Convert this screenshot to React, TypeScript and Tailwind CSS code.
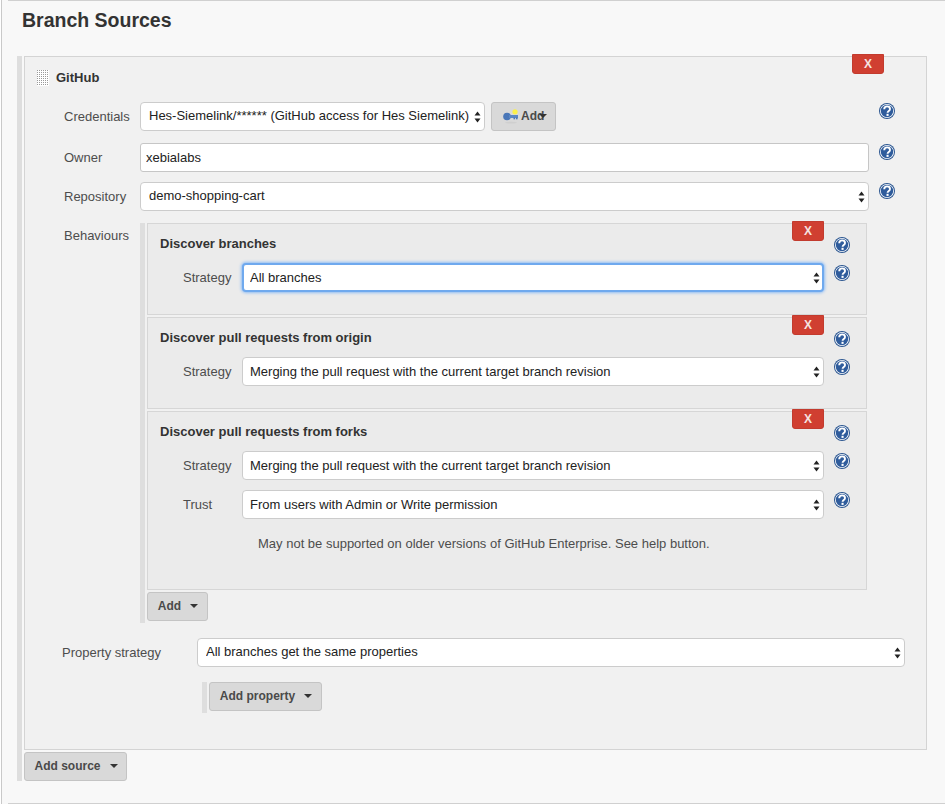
function HelpIcon({ className = "" }: { className?: string }) {
  return (
    <svg className={`shrink-0 ${className}`} width="16" height="16" viewBox="0 0 16 16">
      <circle cx="8" cy="8" r="8" fill="#2b5690" />
      <circle cx="8" cy="8" r="7" fill="#fff" />
      <circle cx="8" cy="8" r="6.2" fill="#2f5c9c" />
      <path d="M5.2 6.2C5.3 4.3 6.5 3.4 8.1 3.4c1.7 0 2.9 1 2.9 2.5 0 2.2-2.4 2-2.4 3.9" fill="none" stroke="#fff" strokeWidth="1.9" />
      <rect x="7.5" y="10.8" width="2.1" height="2.1" fill="#fff" />
    </svg>
  );
}

function Caret() {
  return <span className="ml-[9px] inline-block h-0 w-0 border-x-[4px] border-t-[4px] border-x-transparent border-t-[#333]" />;
}

function DropButton({ label, className = "" }: { label: string; className?: string }) {
  return (
    <button className={`flex h-[29px] items-center justify-center rounded-[3px] border border-[#c4c4c4] bg-[#d9d9d9] pb-[2px] pl-[1px] text-[12px] font-bold text-[#4a4a4a] ${className}`}>
      {label}
      <Caret />
    </button>
  );
}

function DeleteButton({ className = "" }: { className?: string }) {
  return (
    <button className={`absolute flex h-[20px] w-[32px] items-center justify-center rounded-b-[3px] border border-[#c23b2e] bg-[#d03f31] text-[12px] font-bold text-[#f6e3e0] ${className}`}>
      X
    </button>
  );
}

function Select({ value, className = "", selectClass = "pl-2 pb-[2px]", focused = false }: { value: string; className?: string; selectClass?: string; focused?: boolean }) {
  return (
    <div className={`relative h-[29px] ${className}`}>
      <select
        defaultValue={value}
        className={`h-full w-full appearance-none rounded-[4px] bg-white pr-3 text-[13px] text-[#222] outline-none ${selectClass} ${
          focused ? "border-2 border-[#6fa9ee] shadow-[0_0_3px_1px_#8fbdf5]" : "border border-[#cccccc]"
        }`}
      >
        <option>{value}</option>
      </select>
      <svg className="pointer-events-none absolute right-[4px] top-[9px]" width="7" height="12" viewBox="0 0 7 12">
        <path d="M3.5 0.5 6.5 4.5H.5ZM3.5 11.5 .5 7.5H6.5Z" fill="#222" />
      </svg>
    </div>
  );
}

function DragHandle() {
  return (
    <svg width="12" height="16" viewBox="0 0 12 16" className="bg-white">
      <defs>
        <pattern id="dots" width="2" height="2" patternUnits="userSpaceOnUse">
          <rect width="1" height="1" fill="#9a9a9a" />
        </pattern>
      </defs>
      <rect width="12" height="16" fill="url(#dots)" />
    </svg>
  );
}

function KeyIcon() {
  return (
    <svg width="16" height="16" viewBox="0 0 16 16" className="shrink-0">
      <ellipse cx="8" cy="14.6" rx="6" ry="0.9" fill="#cfcfcf" />
      <circle cx="4" cy="8.5" r="3.8" fill="#4a77b8" />
      <rect x="6" y="7" width="9" height="3" fill="#5b87c4" />
      <rect x="10.5" y="9.5" width="1.6" height="1.8" fill="#4a77b8" />
      <rect x="13" y="9.5" width="1.6" height="1.8" fill="#4a77b8" />
      <circle cx="12" cy="3.8" r="2.6" fill="#fbf04a" />
    </svg>
  );
}

function FieldRow({ label, children }: { label: string; children: React.ReactNode }) {
  return (
    <div className="ml-[39px] flex h-[29px] w-[831px] items-start">
      <div className="w-[76px] shrink-0 pt-[7px] text-[13px] leading-[15px] text-[#4d4d4d]">{label}</div>
      <div className="w-[729px] shrink-0">{children}</div>
      <HelpIcon className="ml-[10px] mt-px" />
    </div>
  );
}

function StrategyRow({ label, value, focused }: { label: string; value: string; focused?: boolean }) {
  return (
    <div className="flex h-[29px] items-start">
      <div className="ml-[35px] w-[59px] shrink-0 pt-[7px] text-[13px] leading-[15px] text-[#4d4d4d]">{label}</div>
      <Select value={value} focused={focused} selectClass={focused ? "pl-[6px]" : "pl-[7px]"} className="w-[582px] shrink-0" />
      <HelpIcon className="ml-[10px] mt-[2px]" />
    </div>
  );
}

function Behaviour({ title, className, children }: { title: string; className: string; children: React.ReactNode }) {
  return (
    <div className={`relative border border-[#d6d6d6] bg-[#ebebeb] ${className}`}>
      <DeleteButton className="right-[42px] top-[-3px]" />
      <HelpIcon className="absolute right-[16px] top-[13px]" />
      <div className="ml-3 pb-px pt-[12px] text-[13px] font-bold leading-[15px] text-[#333]">{title}</div>
      <div className="mt-[11px]">{children}</div>
    </div>
  );
}

const MERGE = "Merging the pull request with the current target branch revision";

export default function App() {
  return (
    <div className="h-[804px] w-[946px] overflow-hidden bg-white pl-px pr-px font-['Liberation_Sans',Arial,sans-serif]">
      <div className="flex h-[804px] flex-col border-l border-[#c9c9c9] bg-[#f8f8f8]">
        <div className="ml-[6px] h-px shrink-0 bg-[#d0d0d0]" />
        <h2 className="ml-5 mt-[9px] text-[19.5px] font-bold leading-[21px] text-[#333]">Branch Sources</h2>

        <div className="ml-[15px] mt-[25px] w-[910px] border-l-[5px] border-[#dedede] pl-[2px]">
          <div className="relative h-[694px] w-[903px] border border-[#d4d4d4] bg-[#f1f1f1]">
            <DeleteButton className="left-[827px] top-[-3px]" />
            <div className="ml-3 mt-[13px] flex h-[16px] items-center">
              <DragHandle />
              <span className="ml-[7px] text-[13px] font-bold text-[#333]">GitHub</span>
            </div>

            <div className="ml-[39px] mt-4 flex h-[29px] w-[831px] items-start">
              <div className="w-[76px] shrink-0 pt-[7px] text-[13px] leading-[15px] text-[#4d4d4d]">Credentials</div>
              <Select value="Hes-Siemelink/****** (GitHub access for Hes Siemelink)" className="w-[345px] shrink-0" />
              <button className="ml-[6px] flex h-[29px] w-[65px] shrink-0 items-center rounded-[3px] border border-[#c4c4c4] bg-[#d9d9d9] pb-[2px] pl-[11px] text-[12px] font-bold text-[#4a4a4a]">
                <KeyIcon />
                <span className="ml-[2px]">Add</span>
                <span className="ml-[-5px] inline-block h-0 w-0 border-x-[4px] border-t-[4px] border-x-transparent border-t-[#333]" />
              </button>
              <HelpIcon className="ml-[323px] mt-px" />
            </div>

            <div className="mt-3">
              <FieldRow label="Owner">
                <input
                  defaultValue="xebialabs"
                  className="h-[29px] w-full rounded-[3px] border border-[#c6c6c6] bg-white pl-[5px] text-[13px] text-[#222] outline-none"
                />
              </FieldRow>
            </div>
            <div className="mt-[10px]">
              <FieldRow label="Repository">
                <Select value="demo-shopping-cart" />
              </FieldRow>
            </div>

            <div className="ml-[39px] mt-3 flex items-start">
              <div className="w-[76px] shrink-0 pt-[5px] text-[13px] leading-[15px] text-[#4d4d4d]">Behaviours</div>
              <div className="h-[400px] w-[727px] shrink-0 border-l-[5px] border-[#dedede] pl-[2px]">
                <Behaviour title="Discover branches" className="h-[92px] w-[720px]">
                  <StrategyRow label="Strategy" value="All branches" focused />
                </Behaviour>
                <Behaviour title="Discover pull requests from origin" className="mt-[2px] h-[92px] w-[720px]">
                  <StrategyRow label="Strategy" value={MERGE} />
                </Behaviour>
                <Behaviour title="Discover pull requests from forks" className="mt-[2px] h-[179px] w-[720px]">
                  <StrategyRow label="Strategy" value={MERGE} />
                  <div className="mt-[10px]">
                    <StrategyRow label="Trust" value="From users with Admin or Write permission" />
                  </div>
                  <p className="ml-[110px] mt-[17px] text-[13px] leading-[15px] text-[#4d4d4d]">
                    May not be supported on older versions of GitHub Enterprise. See help button.
                  </p>
                </Behaviour>
                <DropButton label="Add" className="mt-[2px] w-[61px]" />
              </div>
            </div>

            <div className="ml-[37px] mt-[15px] flex h-[29px] items-start">
              <div className="w-[135px] shrink-0 pt-[7px] text-[13px] leading-[15px] text-[#4d4d4d]">Property strategy</div>
              <Select value="All branches get the same properties" className="w-[708px] shrink-0" />
            </div>

            <div className="ml-[177px] mt-[15px] h-[31px] w-[120px] border-l-[5px] border-[#dedede] pl-[2px]">
              <DropButton label="Add property" className="w-[113px]" />
            </div>
          </div>
          <DropButton label="Add source" className="mt-[2px] w-[103px]" />
        </div>

        <div className="ml-[6px] mt-auto h-px shrink-0 bg-[#d0d0d0]" />
      </div>
    </div>
  );
}
